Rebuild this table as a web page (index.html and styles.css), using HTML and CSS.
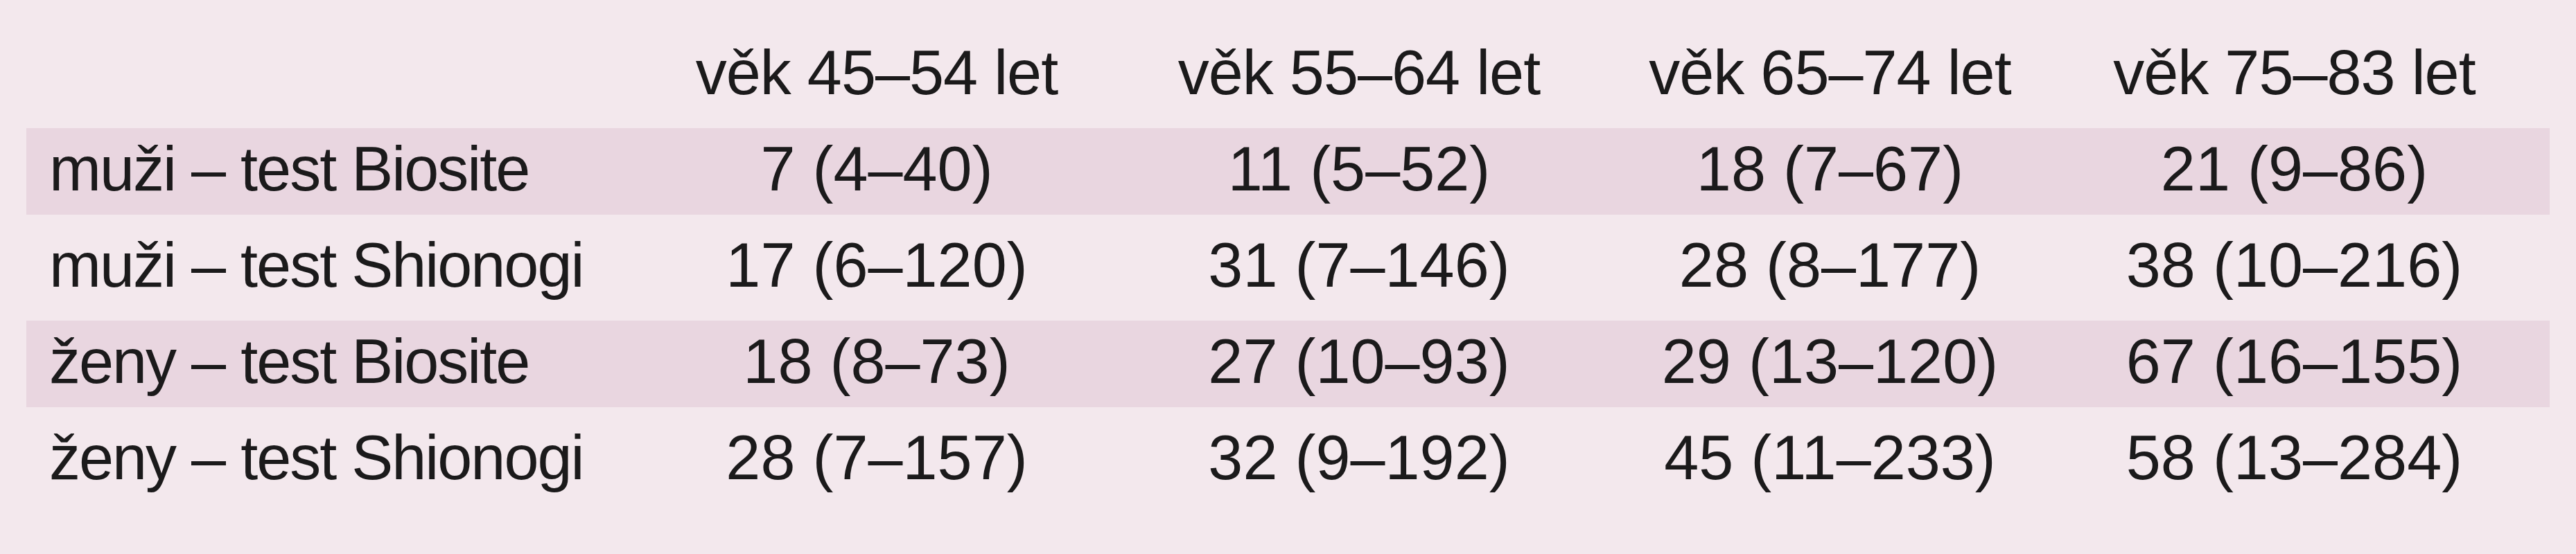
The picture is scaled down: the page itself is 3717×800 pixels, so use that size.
FILE: index.html
```html
<!DOCTYPE html>
<html lang="cs">
<head>
<meta charset="utf-8">
<title>Tabulka</title>
<link rel="stylesheet" href="styles.css">
</head>
<body>
<div class="table">
  <div class="row head">
    <div class="label"></div>
    <div class="cell">věk 45–54 let</div>
    <div class="cell">věk 55–64 let</div>
    <div class="cell">věk 65–74 let</div>
    <div class="cell">věk 75–83 let</div>
  </div>
  <div class="row stripe">
    <div class="label">muži – test Biosite</div>
    <div class="cell">7 (4–40)</div>
    <div class="cell">11 (5–52)</div>
    <div class="cell">18 (7–67)</div>
    <div class="cell">21 (9–86)</div>
  </div>
  <div class="row">
    <div class="label">muži – test Shionogi</div>
    <div class="cell">17 (6–120)</div>
    <div class="cell">31 (7–146)</div>
    <div class="cell">28 (8–177)</div>
    <div class="cell">38 (10–216)</div>
  </div>
  <div class="row stripe">
    <div class="label">ženy – test Biosite</div>
    <div class="cell">18 (8–73)</div>
    <div class="cell">27 (10–93)</div>
    <div class="cell">29 (13–120)</div>
    <div class="cell">67 (16–155)</div>
  </div>
  <div class="row">
    <div class="label">ženy – test Shionogi</div>
    <div class="cell">28 (7–157)</div>
    <div class="cell">32 (9–192)</div>
    <div class="cell">45 (11–233)</div>
    <div class="cell">58 (13–284)</div>
  </div>
</div>
</body>
</html>
```
FILE: styles.css
```css
html, body {
  margin: 0;
  padding: 0;
  background: #f3e8ed;
}
body {
  width: 3717px;
  height: 800px;
  font-family: "Liberation Sans", Arial, sans-serif;
  color: #1b1a1b;
}
.table {
  display: flex;
  flex-direction: column;
  gap: 14px;
  padding: 46px 38px 0 38px;
}
.row {
  display: grid;
  grid-template-columns: 875px 704px 688px 671px 703px;
  height: 125px;
  font-size: 90px;
  line-height: 118px;
}
.stripe {
  background: #e9d6e0;
}
.label {
  padding-left: 33px;
  letter-spacing: -2px;
  white-space: nowrap;
}
.cell {
  text-align: center;
  white-space: nowrap;
}
.cell:last-child {
  padding-right: 34px;
}
.head .cell {
  letter-spacing: -1px;
}
```
